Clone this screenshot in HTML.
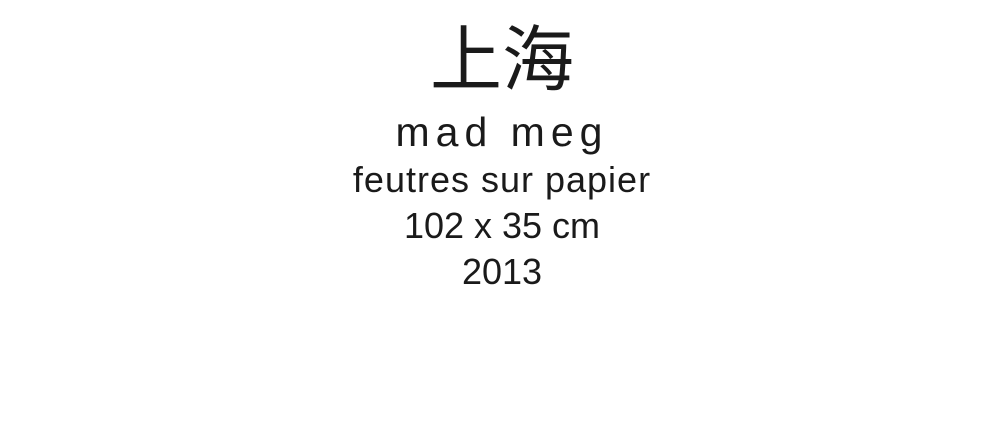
<!DOCTYPE html>
<html><head><meta charset="utf-8"><style>
html,body{margin:0;padding:0;background:#fff;width:1000px;height:424px;overflow:hidden}
div{position:absolute;left:0;width:1004px;text-align:center;color:#1a1a1a;font-family:"Liberation Sans","Noto Sans CJK SC",sans-serif;white-space:nowrap}
</style></head><body>
<div style="top:25px;font-size:72px;line-height:72px;font-weight:400">上海</div>
<div style="top:112px;font-size:41px;line-height:41px;letter-spacing:6px">mad meg</div>
<div style="top:162px;font-size:36px;line-height:36px;letter-spacing:1px">feutres sur papier</div>
<div style="top:208px;font-size:36px;line-height:36px">102 x 35 cm</div>
<div style="top:254px;font-size:36px;line-height:36px">2013</div>
</body></html>
